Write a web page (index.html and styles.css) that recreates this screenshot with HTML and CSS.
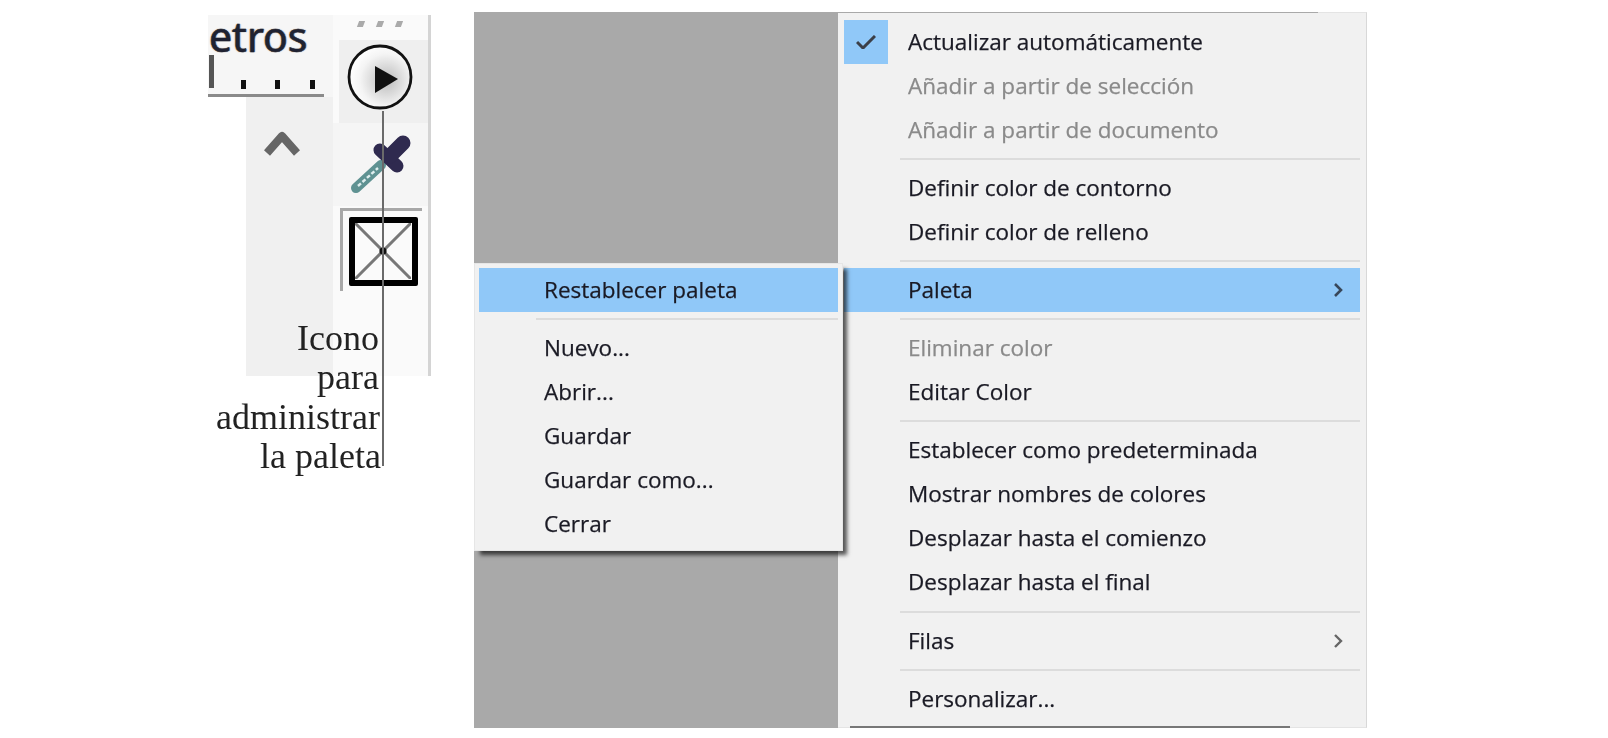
FILE: index.html
```html
<!DOCTYPE html>
<html lang="es">
<head>
<meta charset="utf-8">
<title>Paleta</title>
<link rel="stylesheet" href="styles.css">
</head>
<body>
<main class="page">
  <section class="tools">
    <div class="ruler-panel">
      <div class="ruler-title">etros</div>
      <div class="ruler-ticks"><i class="tick tick-long"></i><i class="tick"></i><i class="tick"></i><i class="tick"></i></div>
    </div>
    <div class="up-panel">
      <svg class="chevron-up" width="36" height="30" viewBox="0 0 36 30"><path d="M3 26 L18 9 L33 26" fill="none" stroke="#666" stroke-width="8" stroke-linejoin="round"/></svg>
    </div>
    <div class="icon-column">
      <div class="grip"><i></i><i></i><i></i></div>
      <div class="play-cell">
        <svg width="68" height="68" viewBox="0 0 68 68"><defs><radialGradient id="g" cx="0.6" cy="0.55" r="0.6"><stop offset="0" stop-color="#bbb"/><stop offset="0.7" stop-color="#f4f4f4"/><stop offset="1" stop-color="#fff"/></radialGradient></defs><circle cx="34" cy="34" r="31" fill="url(#g)" stroke="#111" stroke-width="2.8"/><path d="M29 23 L52 36 L29 50 Z" fill="#111"/></svg>
      </div>
      <div class="dropper-cell">
        <svg class="dropper" width="64" height="62" viewBox="0 0 64 62"><path d="M6 55 L31 32" stroke="#5f9292" stroke-width="10" stroke-linecap="round"/><path d="M8 53 L28 35" stroke="#dfeeee" stroke-width="2.4" stroke-dasharray="4 2"/><path d="M30 17 L47 33" stroke="#2f2a4f" stroke-width="13" stroke-linecap="round"/><path d="M40 23 L53 10" stroke="#2f2a4f" stroke-width="15" stroke-linecap="round"/></svg>
      </div>
      <div class="swatch-cell">
        <div class="swatch">
          <svg width="56" height="56" viewBox="0 0 56 56"><path d="M0 0 L56 56 M56 0 L0 56" stroke="#777" stroke-width="3"/><circle cx="28" cy="28" r="3.6" fill="#111"/></svg>
        </div>
      </div>
    </div>
    <i class="leader"></i>
    <p class="caption">Icono<br>para<br><span class="caption-wide">administrar</span><br><span class="caption-mid">la paleta</span></p>
  </section>

  <section class="shot">
    <nav class="menu main-menu">
      <div class="item checked"><span class="check"><svg width="20" height="14" viewBox="0 0 20 14"><path d="M1 7 L7 13 L19 1" fill="none" stroke="#3b3f48" stroke-width="3"/></svg></span>Actualizar automáticamente</div>
      <div class="item off">Añadir a partir de selección</div>
      <div class="item off">Añadir a partir de documento</div>
      <div class="sep"></div>
      <div class="item">Definir color de contorno</div>
      <div class="item">Definir color de relleno</div>
      <div class="sep"></div>
      <div class="item active">Paleta<svg class="arrow" width="10" height="16" viewBox="0 0 10 16"><path d="M2 2 L8 8 L2 14" fill="none" stroke="#38475a" stroke-width="2.6"/></svg></div>
      <div class="sep"></div>
      <div class="item off">Eliminar color</div>
      <div class="item">Editar Color</div>
      <div class="sep"></div>
      <div class="item">Establecer como predeterminada</div>
      <div class="item">Mostrar nombres de colores</div>
      <div class="item">Desplazar hasta el comienzo</div>
      <div class="item">Desplazar hasta el final</div>
      <div class="sep sep-tall"></div>
      <div class="item">Filas<svg class="arrow" width="10" height="16" viewBox="0 0 10 16"><path d="M2 2 L8 8 L2 14" fill="none" stroke="#666" stroke-width="2.4"/></svg></div>
      <div class="sep"></div>
      <div class="item">Personalizar...</div>
    </nav>
    <nav class="menu sub-menu">
      <div class="item active">Restablecer paleta</div>
      <div class="sep"></div>
      <div class="item">Nuevo...</div>
      <div class="item">Abrir...</div>
      <div class="item">Guardar</div>
      <div class="item">Guardar como...</div>
      <div class="item">Cerrar</div>
    </nav>
  </section>
</main>
</body>
</html>
```

FILE: styles.css
```css
* { box-sizing: border-box; }
html, body { margin: 0; background: #fff; overflow: hidden; }

.page {
  width: 1608px;
  height: 738px;
  display: flex;
  align-items: flex-start;
  padding: 12px 0 0 208px;
  filter: blur(0.6px);
}

/* left figure */
.tools {
  position: relative;
  width: 223px;
  height: 462px;
  margin-top: 3px;
  flex: none;
}
.ruler-panel {
  position: absolute;
  left: 0;
  top: 0;
  width: 125px;
  height: 82px;
  background: #f6f6f6;
}
.ruler-panel::after {
  content: "";
  position: absolute;
  left: 0;
  top: 79px;
  width: 116px;
  height: 3px;
  background: #8a8a8a;
}
.ruler-title {
  position: absolute;
  left: 1px;
  top: 0;
  font: 41px/42px "Noto Sans", sans-serif;
  color: #1f2233;
  -webkit-text-stroke: 0.4px #1f2233;
  text-shadow: -1px 0 1px #e08a2a, 1px 0 1px #3a8ae0;
}
.ruler-ticks { position: absolute; left: 0; top: 0; width: 116px; height: 78px; }
.tick {
  position: absolute;
  top: 65px;
  width: 5px;
  height: 9px;
  background: #111;
}
.tick:nth-child(2) { left: 33px; }
.tick:nth-child(3) { left: 67px; }
.tick:nth-child(4) { left: 102px; }
.tick-long { left: 1px; top: 40px; height: 33px; background: #555; }

.up-panel {
  position: absolute;
  left: 38px;
  top: 82px;
  width: 87px;
  height: 279px;
  background: #f0f0f0;
  display: flex;
  justify-content: center;
  padding: 30px 16px 0 0;
}
.chevron-up { display: block; }

.icon-column {
  position: absolute;
  left: 125px;
  top: 0;
  width: 98px;
  height: 361px;
  background: #fafafa;
  border-right: 3px solid #d4d4d4;
}
.grip { display: flex; gap: 13px; padding: 6px 0 0 25px; height: 25px; }
.grip i { width: 6px; height: 6px; background: #aaa; transform: skewX(-20deg); }
.play-cell {
  margin-left: 6px;
  width: 89px;
  height: 83px;
  background: #efefef;
  padding: 3px 0 0 7px;
}
.play-cell svg { display: block; }
.dropper-cell { height: 83px; padding: 10px 0 0 17px; background: #f5f5f5; }
.dropper { display: block; filter: blur(0.6px); }
.swatch-cell {
  margin: 2px 0 0 7px;
  width: 82px;
  height: 83px;
  border-top: 3px solid #a8a8a8;
  border-left: 3px solid #a8a8a8;
  padding: 6px 0 0 6px;
}
.swatch {
  width: 69px;
  height: 69px;
  border: 6.5px solid #000;
  border-radius: 2px;
  background: #fafafa;
  overflow: hidden;
}
.swatch svg { display: block; }

.leader {
  position: absolute;
  left: 174px;
  top: 96px;
  width: 2px;
  height: 355px;
  background: #6a6a6a;
}
.caption {
  position: absolute;
  right: 52px;
  top: 304px;
  margin: 0;
  text-align: right;
  font: 36px/39.3px "Liberation Serif", serif;
  color: #222;
  white-space: nowrap;
}
.caption-wide { margin-right: -1px; }
.caption-mid { margin-right: -2px; }

/* screenshot with menus */
.shot {
  position: relative;
  margin-left: 43px;
  width: 893px;
  height: 716px;
  background: #a9a9a9;
  flex: none;
}
.menu {
  background: #f1f1f1;
  font: 22.5px/44px "Open Sans", sans-serif;
  color: #1a1a24;
  -webkit-text-stroke: 0.25px currentColor;
}
.main-menu {
  position: absolute;
  left: 364px;
  top: 0;
  width: 529px;
  height: 716px;
  padding: 7px 6px 0 6px;
  border-right: 1px solid #d8d8d8;
  border-top: 1px solid #e4e4e4;
  border-bottom: 1px solid #e4e4e4;
}
.main-menu::before {
  content: "";
  position: absolute;
  left: 0;
  top: -1px;
  width: 480px;
  height: 1px;
  background: #a9a9a9;
}
.main-menu::after {
  content: "";
  position: absolute;
  left: 12px;
  bottom: -1px;
  width: 440px;
  height: 2px;
  background: #777;
}
.main-menu .sep { margin-left: 56px; }
.main-menu .item { padding-left: 64px; }
.sub-menu {
  position: absolute;
  left: 0;
  top: 251px;
  width: 369px;
  height: 288px;
  padding: 4px 4px 0 4px;
  box-shadow: 5px 5px 4px -1px rgba(0, 0, 0, 0.65);
  border: 1px solid #e6e6e6;
}
.sub-menu .item { padding-left: 65px; }
.sub-menu .sep { margin-left: 57px; }
.item {
  position: relative;
  height: 44px;
  white-space: nowrap;
}
.off { color: #8a8a8a; }
.active { background: #90c8f8; }
.sep {
  height: 14px;
  background: linear-gradient(#dcdcdc, #dcdcdc) no-repeat 0 6px / 100% 2px;
}
.sep-tall { height: 15px; background-position: 0 7px; }
.check {
  position: absolute;
  left: 0;
  top: 0;
  width: 44px;
  height: 44px;
  background: #90c8f8;
  display: flex;
  align-items: center;
  justify-content: center;
}
.arrow {
  position: absolute;
  right: 17px;
  top: 14px;
}
```
